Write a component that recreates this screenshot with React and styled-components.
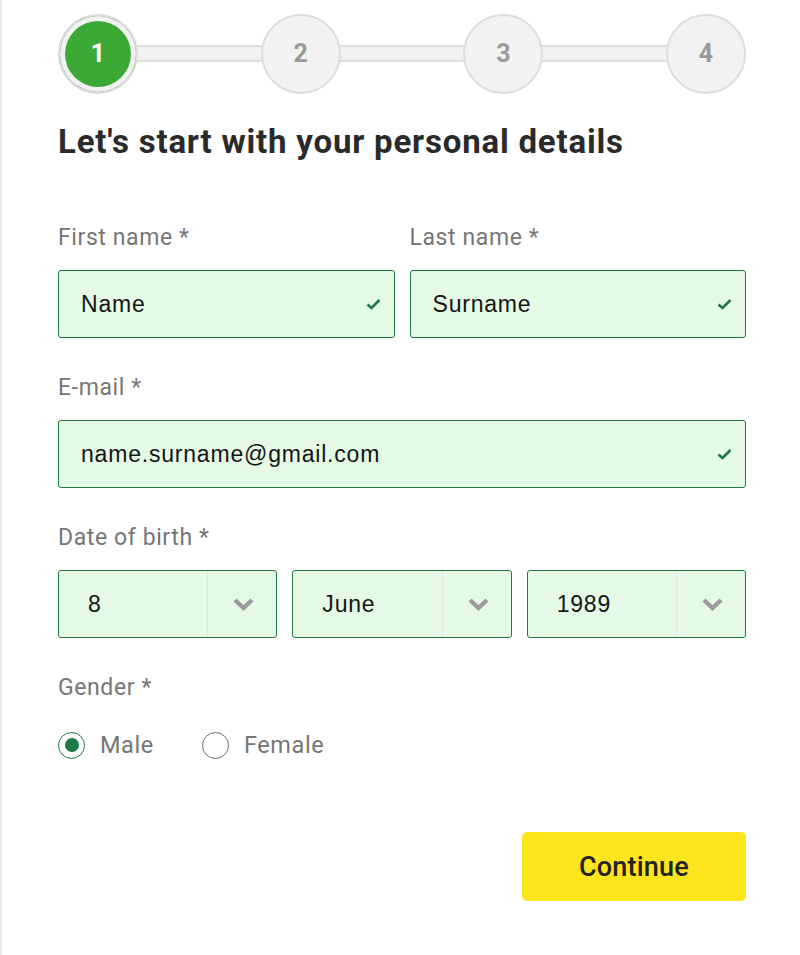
import React, { useState } from "react";
import styled, { createGlobalStyle } from "styled-components";

const GlobalStyle = createGlobalStyle`
  html, body {
    margin: 0;
    padding: 0;
    background: #ffffff;
  }
  body {
    font-family: Roboto, "Liberation Sans", Arial, sans-serif;
    -webkit-font-smoothing: antialiased;
  }
`;

const Page = styled.div`
  box-sizing: border-box;
  min-height: 955px;
  border-left: 2px solid #ebebeb;
  padding: 13px 0 0 56px;
`;

const Form = styled.div`
  width: 688px;
`;

const Stepper = styled.div`
  display: flex;
  align-items: center;
  height: 81px;
`;

const Step = styled.div`
  position: relative;
  z-index: 1;
  box-sizing: border-box;
  flex: 0 0 80px;
  height: 80px;
  border-radius: 50%;
  border: 2px solid #dddddd;
  background: #f2f2f2;
  display: flex;
  align-items: center;
  justify-content: center;
  font-size: 25px;
  font-weight: 700;
  color: #9a9a9a;

  ${props =>
    props.$active &&
    `
    color: #ffffff;
    background: #3aa935;
    box-shadow: inset 0 0 0 5px #f2f2f2;
  `}
`;

const Connector = styled.div`
  flex: 1;
  height: 13px;
  margin: 0 -3px;
  background: #f1f1f1;
  border-top: 2px solid #dedede;
  border-bottom: 2px solid #dedede;
`;

const Title = styled.h1`
  margin: 29px 0 0;
  font-size: 33px;
  line-height: 38px;
  letter-spacing: 0.8px;
  font-weight: 700;
  color: #2a2a2a;
`;

const Grid = styled.div`
  display: grid;
  grid-template-columns: ${props => props.$cols || "1fr"};
  column-gap: 15px;
  margin-top: ${props => props.$top || "38px"};
`;

const Field = styled.div`
  display: flex;
  flex-direction: column;
`;

const Label = styled.label`
  font-size: 23px;
  line-height: 24px;
  letter-spacing: 0.6px;
  color: #767676;
  margin-bottom: ${props => props.$gap || "20px"};
`;

const InputBox = styled.div`
  box-sizing: border-box;
  height: 68px;
  border: 1.5px solid #1d7a3c;
  border-radius: 3px;
  background: #e5fae5;
  display: flex;
  align-items: center;
  padding: 0 13px 0 22px;
`;

const Value = styled.span`
  flex: 1;
  font-family: "Liberation Sans", Arial, sans-serif;
  font-size: 23px;
  color: #151515;
  letter-spacing: 0.8px;
`;

const Check = styled.svg`
  width: 15px;
  height: 12px;
  flex: none;
`;

const SelectBox = styled(InputBox)`
  padding: 0;
`;

const SelectValue = styled(Value)`
  padding-left: 29px;
`;

const ArrowCell = styled.div`
  box-sizing: border-box;
  align-self: stretch;
  width: 69px;
  border-left: 1px solid #dde8dd;
  display: flex;
  align-items: center;
  justify-content: center;
  padding-left: 3px;
`;

const Chevron = styled.svg`
  width: 21px;
  height: 13px;
`;

const RadioRow = styled.div`
  display: flex;
  align-items: center;
  gap: 48px;
  margin-top: 31px;
`;

const RadioOption = styled.label`
  display: flex;
  align-items: center;
  gap: 15px;
  font-size: 23.5px;
  letter-spacing: 0.6px;
  color: #767676;
  cursor: pointer;
`;

const RadioDot = styled.span`
  box-sizing: border-box;
  width: 27px;
  height: 27px;
  border-radius: 50%;
  border: 1.5px solid ${props => (props.$checked ? "#1d7a45" : "#6e6e6e")};
  display: flex;
  align-items: center;
  justify-content: center;

  &::after {
    content: "";
    width: 14px;
    height: 14px;
    border-radius: 50%;
    background: ${props => (props.$checked ? "#1d7a45" : "transparent")};
  }
`;

const Actions = styled.div`
  display: flex;
  justify-content: flex-end;
  margin-top: 73px;
`;

const Button = styled.button`
  width: 224px;
  height: 69px;
  border: none;
  border-radius: 5px;
  background: #fde51e;
  font-family: Roboto, "Liberation Sans", Arial, sans-serif;
  font-size: 27px;
  letter-spacing: 0.2px;
  font-weight: 500;
  color: #222222;
  cursor: pointer;
`;

const CheckIcon = () => (
  <Check viewBox="0 0 15 12">
    <path d="M1.5 6.5 L5.5 10 L13.5 2" fill="none" stroke="#1d7a45" strokeWidth="2.6" />
  </Check>
);

const ChevronIcon = () => (
  <Chevron viewBox="0 0 21 13">
    <path d="M2 2 L10.5 10 L19 2" fill="none" stroke="#9b9b9b" strokeWidth="4.4" />
  </Chevron>
);

const TextField = ({ label, value }) => (
  <Field>
    <Label>{label}</Label>
    <InputBox>
      <Value>{value}</Value>
      <CheckIcon />
    </InputBox>
  </Field>
);

const SelectField = ({ value }) => (
  <SelectBox>
    <SelectValue>{value}</SelectValue>
    <ArrowCell>
      <ChevronIcon />
    </ArrowCell>
  </SelectBox>
);

export default function App() {
  const [gender, setGender] = useState("male");

  return (
    <Page>
      <GlobalStyle />
      <Form>
        <Stepper>
          <Step $active>1</Step>
          <Connector />
          <Step>2</Step>
          <Connector />
          <Step>3</Step>
          <Connector />
          <Step>4</Step>
        </Stepper>

        <Title>Let's start with your personal details</Title>

        <Grid $cols="1fr 1fr" $top="65px">
          <TextField label="First name *" value="Name" />
          <TextField label="Last name *" value="Surname" />
        </Grid>

        <Grid>
          <TextField label="E-mail *" value="name.surname@gmail.com" />
        </Grid>

        <Grid>
          <Field>
            <Label>Date of birth *</Label>
            <Grid $cols="1fr 1fr 1fr" $top="0">
              <SelectField value="8" />
              <SelectField value="June" />
              <SelectField value="1989" />
            </Grid>
          </Field>
        </Grid>

        <Grid>
          <Field>
            <Label as="div" $gap="0">Gender *</Label>
            <RadioRow>
              <RadioOption onClick={() => setGender("male")}>
                <RadioDot $checked={gender === "male"} />
                Male
              </RadioOption>
              <RadioOption onClick={() => setGender("female")}>
                <RadioDot $checked={gender === "female"} />
                Female
              </RadioOption>
            </RadioRow>
          </Field>
        </Grid>

        <Actions>
          <Button>Continue</Button>
        </Actions>
      </Form>
    </Page>
  );
}
